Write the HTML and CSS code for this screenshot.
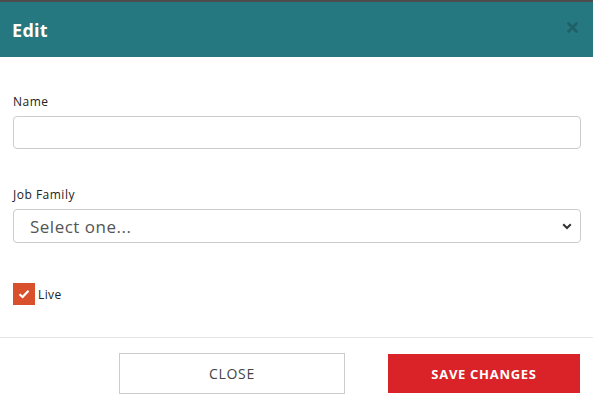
FILE: index.html
```html
<!DOCTYPE html>
<html>
<head>
<meta charset="utf-8">
<link rel="stylesheet" href="styles.css">
</head>
<body>
<div class="modal">
  <div class="header">
    <h1 class="title">Edit</h1>
    <svg class="close-x" width="11" height="11" viewBox="0 0 11 11"><path d="M1.5 1.5 L9.5 9.5 M9.5 1.5 L1.5 9.5" stroke="#1f5f66" stroke-width="2.6" stroke-linecap="round"/></svg>
  </div>
  <div class="body">
    <div class="field">
      <label class="label">Name</label>
      <input class="input" type="text">
    </div>
    <div class="field field-second">
      <label class="label">Job Family</label>
      <div class="select">
        <span class="select-text">Select one...</span>
        <svg class="chevron" width="10" height="7" viewBox="0 0 10 7"><path d="M1.2 1.3 L5 5 L8.8 1.3" fill="none" stroke="#333" stroke-width="2"/></svg>
      </div>
    </div>
    <div class="check-row">
      <span class="checkbox">
        <svg width="12" height="10" viewBox="0 0 12 10"><path d="M1.5 5.2 L4.6 8 L10.5 1.8" fill="none" stroke="#fff" stroke-width="2.2"/></svg>
      </span>
      <span class="check-label">Live</span>
    </div>
  </div>
  <div class="footer">
    <button class="btn btn-close">CLOSE</button>
    <button class="btn btn-save">SAVE CHANGES</button>
  </div>
</div>
</body>
</html>
```
FILE: styles.css
```css
* { box-sizing: border-box; }
html, body { margin: 0; padding: 0; background: #fff; }
body { font-family: "Open Sans", "Liberation Sans", sans-serif; color: #222; }
.modal { width: 593px; height: 407px; border-top: 2px solid #4d4d4d; display: flex; flex-direction: column; }
.header { height: 55px; background: #267880; display: flex; align-items: center; justify-content: space-between; padding: 0 15px 0 12px; }
.title { margin: 0; font-size: 18px; font-weight: 700; color: #fff; letter-spacing: 0.3px; }
.close-x { margin-top: -5px; }
.body { padding: 37px 12px 0 13px; flex: 1; }
.field { display: flex; flex-direction: column; }
.field-second { margin-top: 38px; }
.label { font-size: 12px; color: #222; line-height: 16px; margin-bottom: 6px; letter-spacing: 0.5px; }
.input { width: 568px; height: 33px; border: 1px solid #ccc; border-radius: 4px; margin: 0; }
.select { width: 568px; height: 34px; border: 1px solid #ccc; border-radius: 4px; display: flex; align-items: center; justify-content: space-between; padding: 0 8px 0 16px; }
.select-text { font-size: 17px; color: #555; letter-spacing: 0.5px; }
.check-row { display: flex; align-items: center; margin-top: 40px; gap: 3px; }
.checkbox { width: 22px; height: 22px; background: #d9512c; display: flex; align-items: center; justify-content: center; }
.check-label { font-size: 12px; color: #222; letter-spacing: 0.4px; }
.footer { height: 70px; border-top: 1px solid #e5e5e5; display: flex; align-items: flex-start; padding: 15px 13px 0 119px; gap: 43px; }
.btn { font-family: inherit; font-size: 13px; height: 41px; border-radius: 0; cursor: pointer; letter-spacing: 0.7px; }
.btn-close { width: 226px; background: #fff; border: 1px solid #ccc; color: #444; font-size: 14px; }
.btn-save { width: 192px; background: #da2229; border: none; color: #fff; font-weight: 700; margin-top: 1px; height: 39px; }
```
